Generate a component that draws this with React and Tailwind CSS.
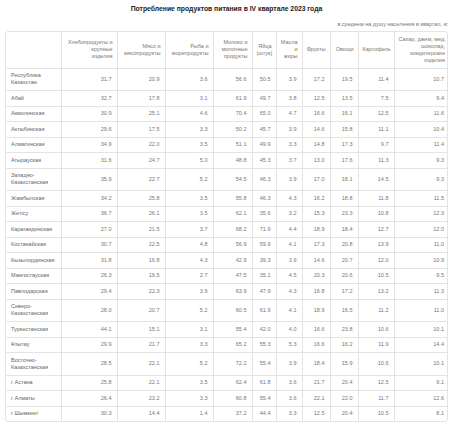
const headers = [
  ['Хлебопродукты и', 'крупные', 'изделия'],
  ['Мясо и', 'мясопродукты'],
  ['Рыба и', 'морепродукты'],
  ['Молоко и', 'молочные', 'продукты'],
  ['Яйца', '(штук)'],
  ['Масла', 'и', 'жиры'],
  ['Фрукты'],
  ['Овощи'],
  ['Картофель'],
  ['Сахар, джем, мед,', 'шоколад,', 'кондитерские', 'изделия'],
];

const widths = ['w-[55px]', 'w-[56px]', 'w-[48px]', 'w-[48px]', 'w-[39px]', 'w-[24px]', 'w-[26px]', 'w-[28px]', 'w-[28px]', 'w-[36px]', 'w-[55px]'];

const rows = [
  [['Республика', 'Казахстан'], '31.7', '20.9', '3.6', '56.6', '50.5', '3.9', '17.2', '19.5', '11.4', '10.7'],
  [['Абай'], '32.7', '17.8', '3.1', '61.9', '49.7', '3.8', '12.5', '13.5', '7.5', '9.4'],
  [['Акмолинская'], '30.9', '25.1', '4.6', '70.4', '65.0', '4.7', '16.6', '16.1', '12.5', '11.6'],
  [['Актюбинская'], '29.6', '17.5', '3.3', '50.2', '45.7', '3.9', '14.6', '15.8', '11.1', '10.4'],
  [['Алматинская'], '34.9', '22.0', '3.5', '51.1', '49.9', '3.3', '14.8', '17.3', '9.7', '11.4'],
  [['Атырауская'], '31.6', '24.7', '5.0', '48.8', '45.3', '3.7', '13.0', '17.6', '11.3', '9.3'],
  [['Западно-', 'Казахстанская'], '35.9', '22.7', '5.2', '54.5', '46.3', '3.9', '17.0', '18.1', '14.5', '9.3'],
  [['Жамбылская'], '34.2', '25.8', '3.5', '55.8', '46.3', '4.3', '16.2', '18.8', '11.8', '11.5'],
  [['Жетісу'], '36.7', '26.1', '3.5', '62.1', '35.6', '3.2', '15.3', '23.3', '10.8', '12.3'],
  [['Карагандинская'], '27.0', '21.5', '3.7', '68.2', '71.9', '4.4', '18.9', '18.4', '12.7', '12.0'],
  [['Костанайская'], '30.7', '22.5', '4.8', '56.9', '59.9', '4.1', '17.3', '20.8', '13.9', '11.0'],
  [['Кызылординская'], '31.8', '16.8', '4.3', '42.9', '39.3', '3.9', '14.6', '20.7', '12.0', '10.9'],
  [['Мангистауская'], '26.3', '19.5', '2.7', '47.5', '35.1', '4.5', '20.3', '20.6', '10.5', '9.5'],
  [['Павлодарская'], '29.4', '22.3', '3.9', '63.9', '47.9', '4.3', '16.8', '17.2', '13.2', '11.3'],
  [['Северо-', 'Казахстанская'], '28.0', '20.7', '5.2', '60.5', '61.9', '4.1', '18.9', '16.5', '11.2', '11.0'],
  [['Туркестанская'], '44.1', '15.1', '3.1', '55.4', '42.0', '4.0', '16.6', '23.8', '10.6', '10.1'],
  [['Ұлытау'], '29.9', '21.7', '3.3', '65.2', '55.3', '5.3', '16.6', '16.2', '11.9', '14.4'],
  [['Восточно-', 'Казахстанская'], '28.5', '22.1', '5.2', '72.2', '55.4', '3.9', '18.4', '15.9', '10.6', '10.1'],
  [['г Астана'], '25.8', '22.1', '3.5', '62.4', '61.8', '3.6', '21.7', '20.4', '12.5', '9.1'],
  [['г Алматы'], '26.4', '23.2', '3.3', '60.8', '55.4', '3.6', '22.1', '22.0', '11.7', '12.6'],
  [['г Шымкент'], '30.3', '14.4', '1.4', '37.2', '44.4', '3.3', '12.5', '20.4', '10.5', '8.1'],
];

const Lines = ({ lines }) =>
  lines.map((l, i) => (
    <span key={i} className="block whitespace-nowrap">
      {l}
    </span>
  ));

export default function App() {
  return (
    <div className="w-[450px] h-[430px] bg-white pl-[5px] pr-[2px] pt-[4px] font-['Liberation_Sans',Arial,sans-serif] overflow-hidden">
      <h1 className="text-center text-[6.8px] leading-[9px] font-bold text-[#222]">
        Потребление продуктов питания в IV квартале 2023 года
      </h1>
      <p className="mt-[7.5px] text-right text-[5.5px] leading-[7px] text-[#777]">
        в среднем на душу населения в квартал, кг
      </p>
      <div className="mt-[3.5px] border border-[#e4e4e4] rounded-[3px] overflow-hidden">
        <table className="w-full table-fixed border-collapse border-hidden text-[5.5px] leading-[7px] text-[#777]">
          <colgroup>
            {widths.map((w, i) => (
              <col key={i} className={w} />
            ))}
          </colgroup>
          <thead>
            <tr>
              <th className="border border-[#e4e4e4]" />
              {headers.map((h, i) => (
                <th
                  key={i}
                  className="border border-[#e4e4e4] px-[4px] py-[3.75px] text-right align-middle font-normal"
                >
                  <Lines lines={h} />
                </th>
              ))}
            </tr>
          </thead>
          <tbody>
            {rows.map(([name, ...vals], r) => (
              <tr key={r}>
                <td className="border border-[#e4e4e4] px-[5px] py-[3.75px] text-left align-middle text-[#666]">
                  <Lines lines={name} />
                </td>
                {vals.map((v, i) => (
                  <td
                    key={i}
                    className="border border-[#e4e4e4] px-[5px] py-[3.75px] text-right align-middle"
                  >
                    {v}
                  </td>
                ))}
              </tr>
            ))}
          </tbody>
        </table>
      </div>
    </div>
  );
}
